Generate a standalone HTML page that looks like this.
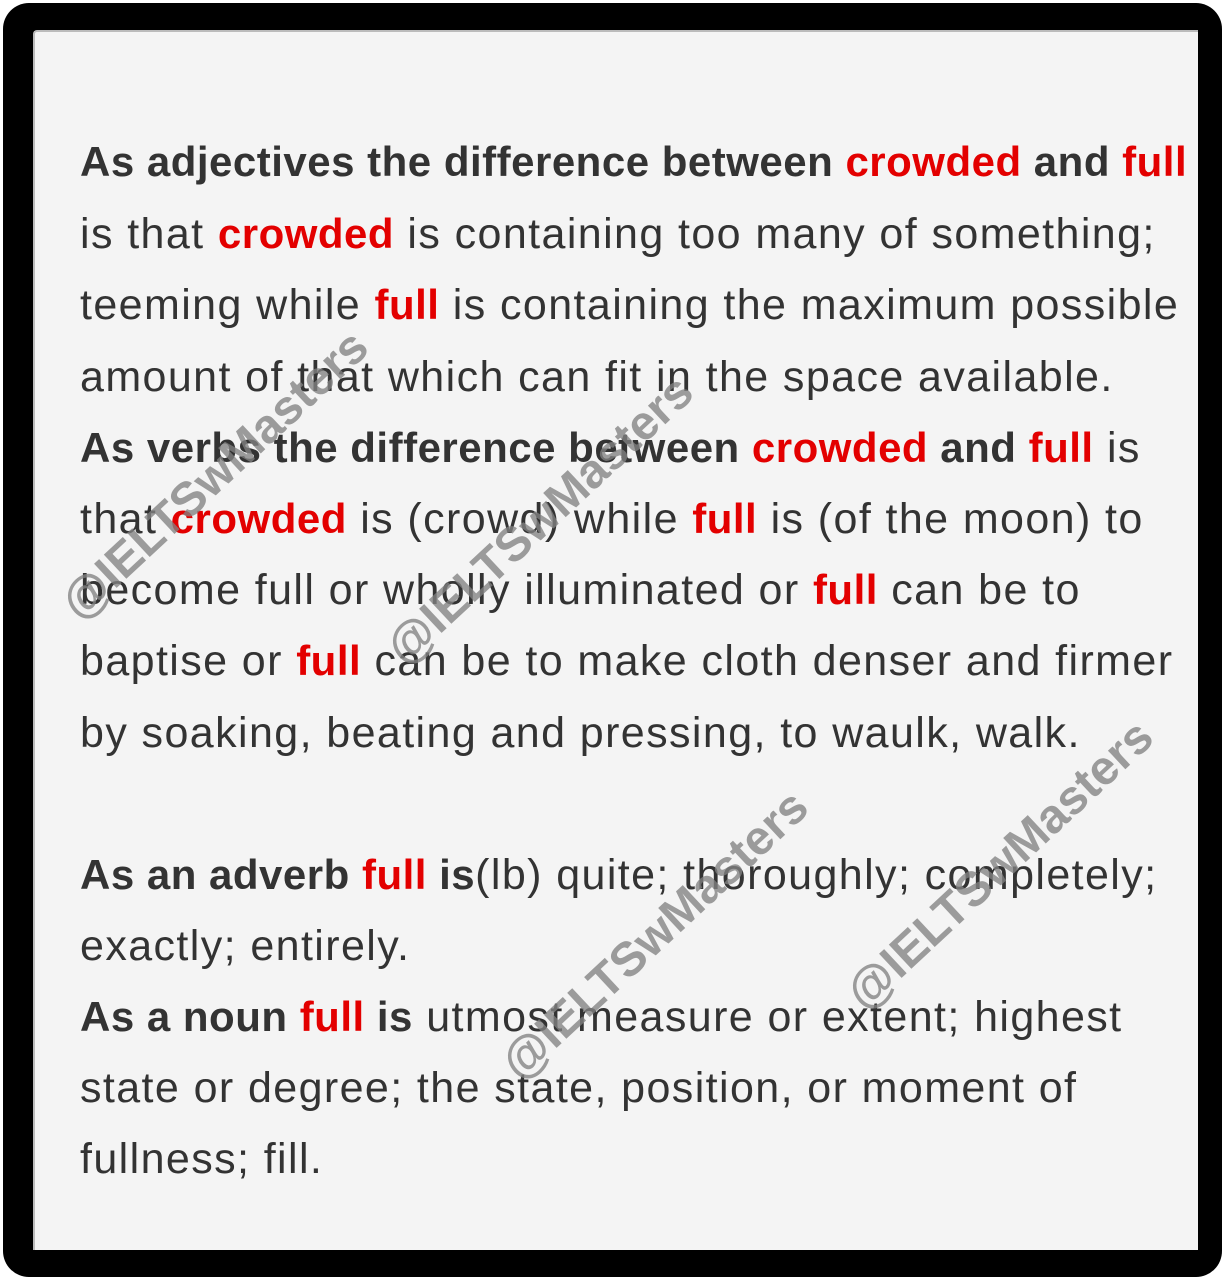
<!DOCTYPE html>
<html><head><meta charset="utf-8"><style>
html,body{margin:0;padding:0;width:1227px;height:1280px;background:#fff;overflow:hidden}
.frame{position:absolute;left:3px;top:3px;width:1219px;height:1274px;background:#000;border-radius:26px}
.inner{position:absolute;left:33px;top:30px;width:1165px;height:1220px;background:#f4f4f4;border-left:2px solid #bbb;border-top:2px solid #bbb;box-sizing:border-box;border-radius:4px 0 0 0}
.l{position:absolute;left:80px;font-family:"Liberation Sans",Arial,sans-serif;font-size:43px;letter-spacing:1.4px;color:#333;white-space:nowrap;line-height:50px}
b{font-weight:bold;color:#333;font-size:42px;letter-spacing:0.5px}
.r{color:#e30000;font-weight:bold;font-size:42px;letter-spacing:0.5px}
.w{position:absolute;font-family:"Liberation Sans",Arial,sans-serif;font-weight:bold;font-size:48px;color:rgba(130,130,130,0.78);white-space:nowrap;transform:translate(-50%,-50%) rotate(-43deg)}
</style></head><body>
<div class="frame"></div>
<div class="inner"></div>
<div class="l" style="top:137px"><b>As adjectives the difference between <span class="r">crowded</span> and <span class="r">full</span></b></div>
<div class="l" style="top:209px">is that <span class="r">crowded</span> is containing too many of something;</div>
<div class="l" style="top:280px">teeming while <span class="r">full</span> is containing the maximum possible</div>
<div class="l" style="top:352px">amount of that which can fit in the space available.</div>
<div class="l" style="top:423px"><b>As verbs the difference between <span class="r">crowded</span> and <span class="r">full</span></b> is</div>
<div class="l" style="top:494px">that <span class="r">crowded</span> is (crowd) while <span class="r">full</span> is (of the moon) to</div>
<div class="l" style="top:565px">become full or wholly illuminated or <span class="r">full</span> can be to</div>
<div class="l" style="top:636px">baptise or <span class="r">full</span> can be to make cloth denser and firmer</div>
<div class="l" style="top:708px">by soaking, beating and pressing, to waulk, walk.</div>
<div class="l" style="top:850px"><b>As an adverb <span class="r">full</span> is</b>(lb) quite; thoroughly; completely;</div>
<div class="l" style="top:921px">exactly; entirely.</div>
<div class="l" style="top:992px"><b>As a noun <span class="r">full</span> is</b> utmost measure or extent; highest</div>
<div class="l" style="top:1063px">state or degree; the state, position, or moment of</div>
<div class="l" style="top:1134px">fullness; fill.</div>
<div class="w" style="left:215px;top:475px">@IELTSwMasters</div>
<div class="w" style="left:540px;top:520px">@IELTSwMasters</div>
<div class="w" style="left:655px;top:935px">@IELTSwMasters</div>
<div class="w" style="left:1000px;top:865px">@IELTSwMasters</div>
</body></html>
